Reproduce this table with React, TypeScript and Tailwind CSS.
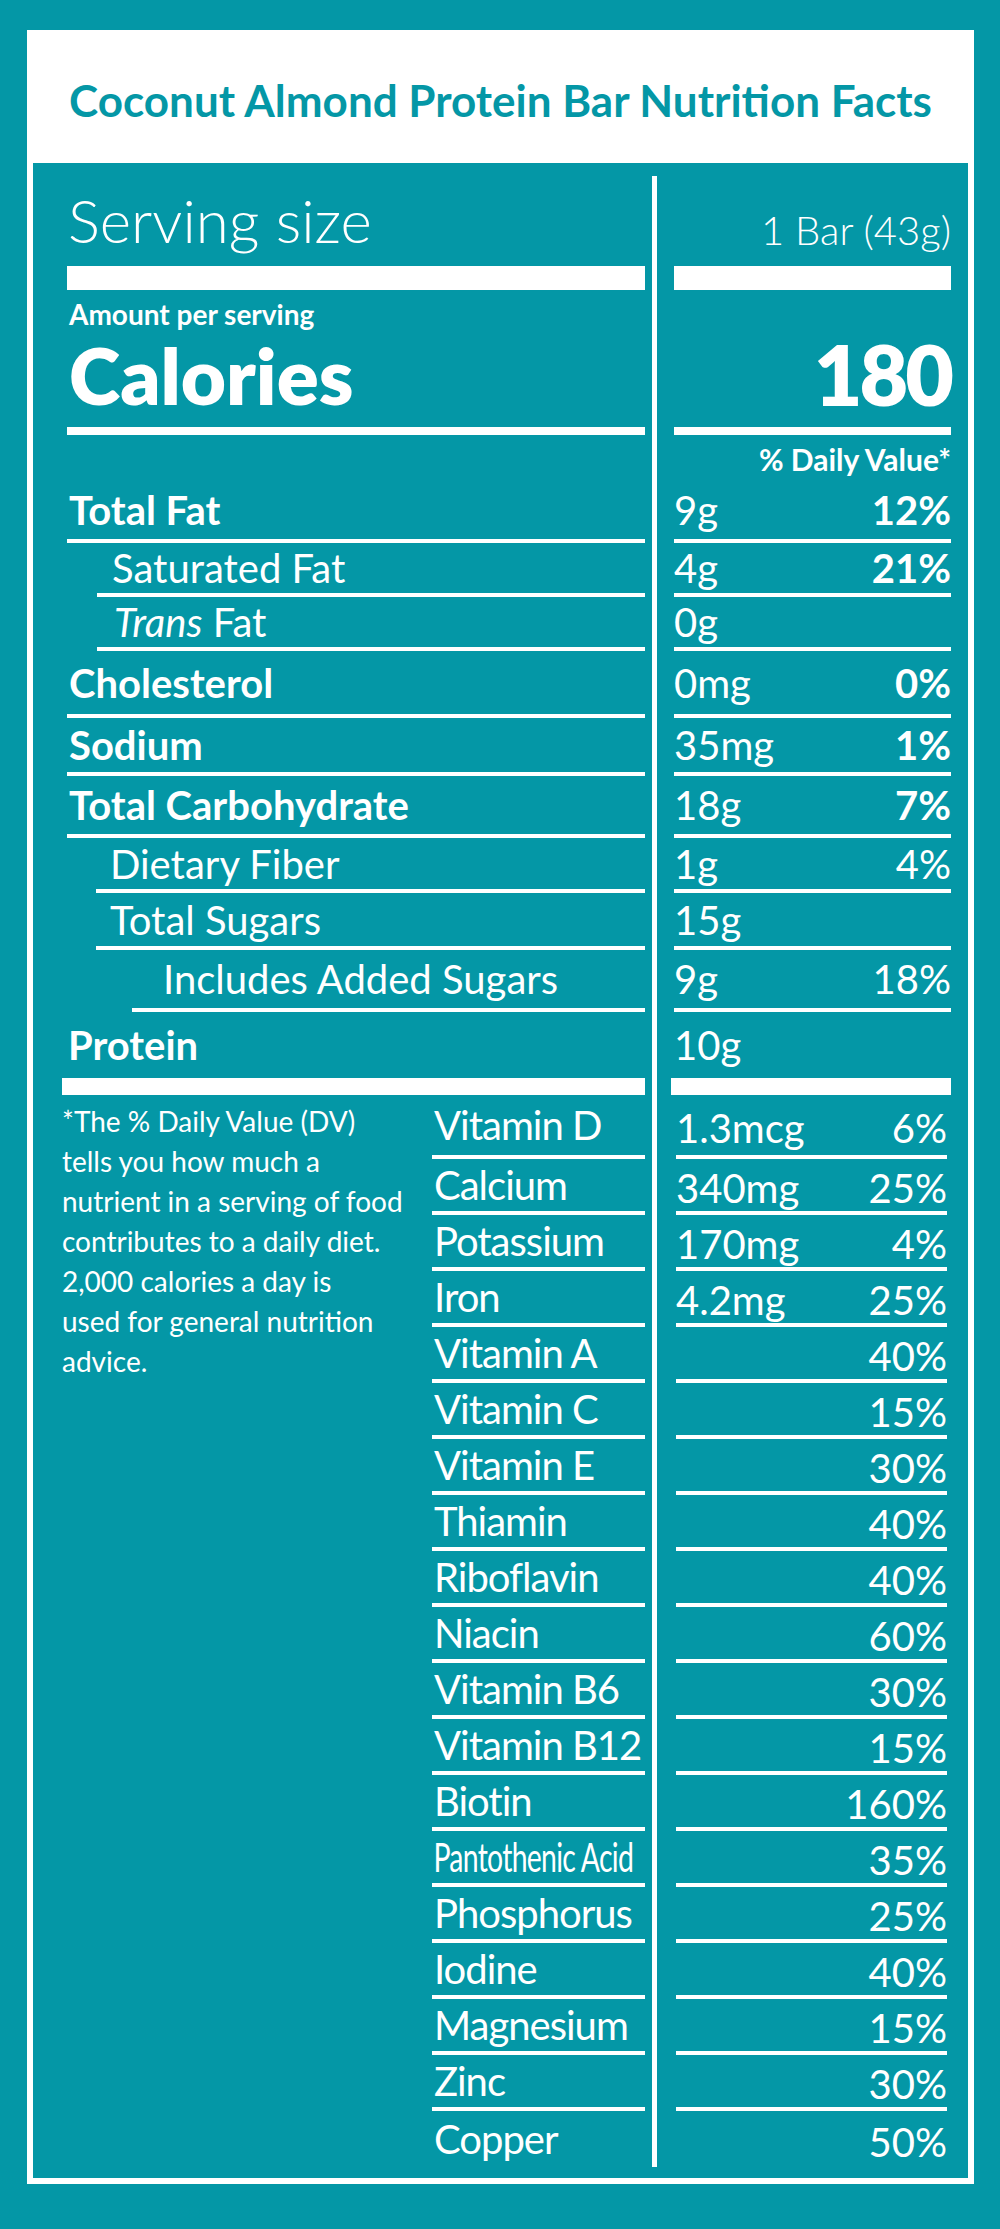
type Nutrient = {
  name: React.ReactNode;
  bold?: boolean;
  h: string;
  line: string;
  pad: string;
  amt: string;
  dv?: string;
  dvBold?: boolean;
  last?: boolean;
};

const nutrients: Nutrient[] = [
  { name: "Total Fat", bold: true, h: "h-[63px]", line: "", pad: "pl-[2px]", amt: "9g", dv: "12%", dvBold: true },
  { name: "Saturated Fat", h: "h-[54px]", line: "ml-[30px]", pad: "pl-[15px]", amt: "4g", dv: "21%", dvBold: true },
  {
    name: (
      <>
        <i className="italic">Trans</i> Fat
      </>
    ),
    h: "h-[54px]",
    line: "ml-[30px]",
    pad: "pl-[17px]",
    amt: "0g",
  },
  { name: "Cholesterol", bold: true, h: "h-[67px]", line: "", pad: "pl-[2px]", amt: "0mg", dv: "0%", dvBold: true },
  { name: "Sodium", bold: true, h: "h-[58px]", line: "", pad: "pl-[2px]", amt: "35mg", dv: "1%", dvBold: true },
  { name: "Total Carbohydrate", bold: true, h: "h-[62px]", line: "", pad: "pl-[2px]", amt: "18g", dv: "7%", dvBold: true },
  { name: "Dietary Fiber", h: "h-[55px]", line: "ml-[29px]", pad: "pl-[14px]", amt: "1g", dv: "4%" },
  { name: "Total Sugars", h: "h-[57px]", line: "ml-[29px]", pad: "pl-[14px]", amt: "15g" },
  { name: "Includes Added Sugars", h: "h-[62px]", line: "ml-[65px]", pad: "pl-[31px]", amt: "9g", dv: "18%" },
  { name: "Protein", bold: true, h: "h-[66px]", line: "", pad: "pl-[1px]", amt: "10g", last: true },
];

const vitamins = [
  { name: "Vitamin D", amt: "1.3mcg", dv: "6%" },
  { name: "Calcium", amt: "340mg", dv: "25%" },
  { name: "Potassium", amt: "170mg", dv: "4%" },
  { name: "Iron", amt: "4.2mg", dv: "25%" },
  { name: "Vitamin A", amt: "", dv: "40%" },
  { name: "Vitamin C", amt: "", dv: "15%" },
  { name: "Vitamin E", amt: "", dv: "30%" },
  { name: "Thiamin", amt: "", dv: "40%" },
  { name: "Riboflavin", amt: "", dv: "40%" },
  { name: "Niacin", amt: "", dv: "60%" },
  { name: "Vitamin B6", amt: "", dv: "30%" },
  { name: "Vitamin B12", amt: "", dv: "15%" },
  { name: "Biotin", amt: "", dv: "160%" },
  { name: "Pantothenic Acid", amt: "", dv: "35%", narrow: true },
  { name: "Phosphorus", amt: "", dv: "25%" },
  { name: "Iodine", amt: "", dv: "40%" },
  { name: "Magnesium", amt: "", dv: "15%" },
  { name: "Zinc", amt: "", dv: "30%" },
  { name: "Copper", amt: "", dv: "50%" },
];

const App = () => (
  <div className="min-h-[2229px] bg-[#0497a6] pt-[30px] pb-[45px] pl-[27px] font-[family-name:Lato,'Open_Sans',sans-serif] text-white">
    <div className="w-[947px] border-[6px] border-white">
      {/* Header */}
      <div className="h-[127px] bg-white flex items-center justify-center">
        <h1 className="text-[44px] leading-none font-bold text-[#0497a6]">
          Coconut Almond Protein Bar Nutrition Facts
        </h1>
      </div>

      {/* Body */}
      <div className="flex pt-[13px] pb-[11px]">
        {/* Left column */}
        <div className="w-[624px] shrink-0 border-r-[5px] border-white pl-[34px] pr-[7px] flex flex-col">
          <div className="h-[90px] flex items-end pb-[16px]">
            <span className="text-[60px] leading-none font-light pl-[1px]">Serving size</span>
          </div>
          <div className="h-[24px] bg-white" />
          <div className="h-[137px] flex flex-col justify-end pb-[13px] pl-[2px]">
            <span className="text-[28px] leading-none font-bold mb-[8px]">Amount per serving</span>
            <span className="text-[78px] leading-none font-extrabold">Calories</span>
          </div>
          <div className="h-[8px] bg-white" />
          <div className="h-[45px]" />
          {nutrients.map((n, i) => (
            <div
              key={i}
              className={`${n.h} ${n.line} flex items-center ${n.last ? "" : "border-b-4 border-white"}`}
            >
              <span className={`${n.pad} text-[40px] leading-none ${n.bold ? "font-bold" : "font-normal"}`}>
                {n.name}
              </span>
            </div>
          ))}
          <div className="h-[17px] bg-white -ml-[5px]" />

          <div className="flex">
            <p className="-ml-[5px] w-[370px] shrink-0 pt-[6px] text-[28px] leading-[40px] font-normal">
              *The % Daily Value (DV)
              <br />
              tells you how much a
              <br />
              nutrient in a serving of food
              <br />
              contributes to a daily diet.
              <br />
              2,000 calories a day is
              <br />
              used for general nutrition
              <br />
              advice.
            </p>
            <div className="w-[213px] flex flex-col">
              {vitamins.map((v, i) => (
                <div
                  key={v.name}
                  className={`${i === 0 ? "h-[64px]" : "h-[56px]"} flex items-center ${
                    i === vitamins.length - 1 ? "" : "border-b-4 border-white"
                  }`}
                >
                  <span
                    className={`pl-[2px] text-[40px] leading-none font-normal whitespace-nowrap ${
                      v.narrow ? "inline-block origin-left scale-x-[0.71] tracking-[-1px]" : "tracking-[-1px]"
                    }`}
                  >
                    {v.name}
                  </span>
                </div>
              ))}
            </div>
          </div>
        </div>

        {/* Right column */}
        <div className="flex-1 pl-[17px] pr-[17px] flex flex-col">
          <div className="h-[90px] flex items-end justify-end pb-[16px]">
            <span className="text-[40px] leading-none font-light">1 Bar (43g)</span>
          </div>
          <div className="h-[24px] bg-white" />
          <div className="h-[137px] flex items-end justify-end pb-[11px]">
            <span className="text-[84px] leading-none font-extrabold tracking-[-3px]">180</span>
          </div>
          <div className="h-[8px] bg-white" />
          <div className="h-[45px] flex justify-end pt-[9px]">
            <span className="text-[30px] leading-none font-bold">% Daily Value*</span>
          </div>
          {nutrients.map((n, i) => (
            <div
              key={i}
              className={`${n.h} flex items-center justify-between ${n.last ? "" : "border-b-4 border-white"}`}
            >
              <span className="text-[40px] leading-none font-normal">{n.amt}</span>
              <span className={`text-[40px] leading-none ${n.dvBold ? "font-bold" : "font-normal"}`}>{n.dv}</span>
            </div>
          ))}
          <div className="h-[17px] bg-white -ml-[3px]" />
          {vitamins.map((v, i) => (
            <div
              key={v.name}
              className={`${i === 0 ? "h-[64px]" : "h-[56px]"} ml-[2px] mr-[4px] pt-[6px] flex items-center justify-between ${
                i === vitamins.length - 1 ? "" : "border-b-4 border-white"
              }`}
            >
              <span className="text-[40px] leading-none font-normal">{v.amt}</span>
              <span className="text-[40px] leading-none font-normal">{v.dv}</span>
            </div>
          ))}
        </div>
      </div>
    </div>
  </div>
);

export default App;
